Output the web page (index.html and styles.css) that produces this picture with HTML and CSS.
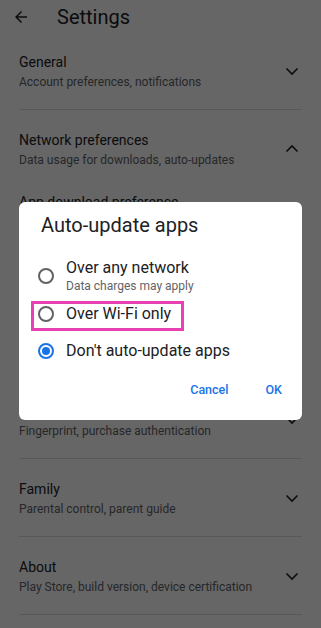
FILE: index.html
```html
<!DOCTYPE html>
<html lang="en">
<head>
<meta charset="utf-8">
<title>Settings</title>
<link rel="stylesheet" href="styles.css">
</head>
<body>
<div class="screen">
  <header class="toolbar">
    <svg class="back" viewBox="0 0 24 24"><path d="M20 11H7.83l5.59-5.59L12 4l-8 8 8 8 1.41-1.41L7.83 13H20v-2z"/></svg>
    <h1>Settings</h1>
  </header>

  <section class="group">
    <div class="group-head">
      <div class="texts">
        <div class="title">General</div>
        <div class="sub">Account preferences, notifications</div>
      </div>
      <svg class="chev" viewBox="0 0 24 24"><polyline points="6.5,9.5 12,15 17.5,9.5"/></svg>
    </div>
  </section>

  <section class="group expanded">
    <div class="group-head">
      <div class="texts">
        <div class="title">Network preferences</div>
        <div class="sub">Data usage for downloads, auto-updates</div>
      </div>
      <svg class="chev" viewBox="0 0 24 24"><polyline points="6.5,14.5 12,9 17.5,14.5"/></svg>
    </div>
    <div class="subitems">
      <div class="subitem">
        <div class="title">App download preference</div>
        <div class="sub">Ask me every time</div>
      </div>
      <div class="subitem">
        <div class="title">Auto-update apps</div>
        <div class="sub">Don't auto-update apps</div>
      </div>
      <div class="subitem">
        <div class="title">Auto-play videos</div>
        <div class="sub">Auto-play videos over Wi-Fi only</div>
      </div>
    </div>
  </section>

  <section class="group">
    <div class="group-head">
      <div class="texts">
        <div class="title">Authentication</div>
        <div class="sub">Fingerprint, purchase authentication</div>
      </div>
      <svg class="chev" viewBox="0 0 24 24"><polyline points="6.5,9.5 12,15 17.5,9.5"/></svg>
    </div>
  </section>

  <section class="group">
    <div class="group-head">
      <div class="texts">
        <div class="title">Family</div>
        <div class="sub">Parental control, parent guide</div>
      </div>
      <svg class="chev" viewBox="0 0 24 24"><polyline points="6.5,9.5 12,15 17.5,9.5"/></svg>
    </div>
  </section>

  <section class="group">
    <div class="group-head">
      <div class="texts">
        <div class="title">About</div>
        <div class="sub">Play Store, build version, device certification</div>
      </div>
      <svg class="chev" viewBox="0 0 24 24"><polyline points="6.5,9.5 12,15 17.5,9.5"/></svg>
    </div>
  </section>
</div>

<div class="scrim"></div>

<div class="dialog" role="dialog">
  <h2 class="dialog-title">Auto-update apps</h2>
  <div class="options">
    <div class="option">
      <span class="radio"></span>
      <div class="option-texts">
        <div class="option-label">Over any network</div>
        <div class="option-sub">Data charges may apply</div>
      </div>
    </div>
    <div class="option highlighted">
      <span class="radio"></span>
      <div class="option-texts">
        <div class="option-label">Over Wi-Fi only</div>
      </div>
    </div>
    <div class="option last">
      <span class="radio checked"></span>
      <div class="option-texts">
        <div class="option-label">Don't auto-update apps</div>
      </div>
    </div>
  </div>
  <div class="actions">
    <button class="btn">Cancel</button>
    <button class="btn">OK</button>
  </div>
</div>
</body>
</html>
```
FILE: styles.css
```css
* {
  box-sizing: border-box;
  margin: 0;
  padding: 0;
}

html, body {
  width: 321px;
  height: 628px;
  overflow: hidden;
}

body {
  font-family: Roboto, "Noto Sans", sans-serif;
  background: #ffffff;
  color: #202124;
}

.toolbar {
  display: flex;
  align-items: center;
  gap: 27px;
  height: 32px;
  padding: 2px 0 0 12px;
}

.back {
  width: 18px;
  height: 18px;
  fill: #202124;
}

.toolbar h1 {
  font-size: 20px;
  font-weight: 400;
  line-height: 24px;
}

.group {
  margin: 0 19px;
  border-bottom: 1px solid #dadce0;
}

.group-head {
  display: flex;
  align-items: center;
  padding: 20px 0 19px;
}

.group.expanded .group-head {
  padding-bottom: 24px;
}

.texts {
  flex: 1;
}

.title {
  font-size: 14px;
  line-height: 20px;
}

.sub {
  font-size: 12px;
  line-height: 16px;
  margin-top: 2px;
  color: #5f6368;
}

.chev {
  width: 24px;
  height: 24px;
  margin-right: -2px;
  fill: none;
  stroke: #202124;
  stroke-width: 1.6;
}

.subitem {
  padding-bottom: 25px;
}

.subitem:last-child {
  padding-bottom: 24px;
}

.scrim {
  position: fixed;
  inset: 0;
  background: rgba(0, 0, 0, 0.6);
  z-index: 1;
}

.dialog {
  position: absolute;
  top: 202px;
  left: 19px;
  width: 283px;
  background: #ffffff;
  border-radius: 6px;
  padding: 11px 8px 14px 12px;
  z-index: 2;
}

.dialog-title {
  font-size: 20px;
  font-weight: 400;
  line-height: 24px;
  margin: 0 0 18px 10px;
  color: #202124;
}

.options {
  display: flex;
  flex-direction: column;
  align-items: flex-start;
}

.option {
  display: flex;
  align-items: center;
  gap: 12px;
  padding: 0 10px 4px 4px;
  border: 3px solid transparent;
}

.option.highlighted {
  border-color: #e940b4;
}

.option.last {
  margin-top: 7px;
}

.radio {
  display: flex;
  align-items: center;
  justify-content: center;
  width: 16px;
  height: 16px;
  border: 2px solid #5f6368;
  border-radius: 50%;
  flex: none;
}

.radio.checked {
  border-color: #1a73e8;
}

.radio.checked::after {
  content: "";
  width: 8px;
  height: 8px;
  border-radius: 50%;
  background: #1a73e8;
}

.option-label {
  font-size: 16px;
  line-height: 20px;
  color: #202124;
}

.option-sub {
  font-size: 12px;
  line-height: 16px;
  color: #5f6368;
}

.actions {
  display: flex;
  justify-content: flex-end;
  gap: 13px;
  margin-top: 6px;
}

.btn {
  font-family: Roboto, "Noto Sans", sans-serif;
  font-size: 12.5px;
  font-weight: 500;
  line-height: 16px;
  color: #1a73e8;
  background: none;
  border: none;
  padding: 8px 12px;
}
```
